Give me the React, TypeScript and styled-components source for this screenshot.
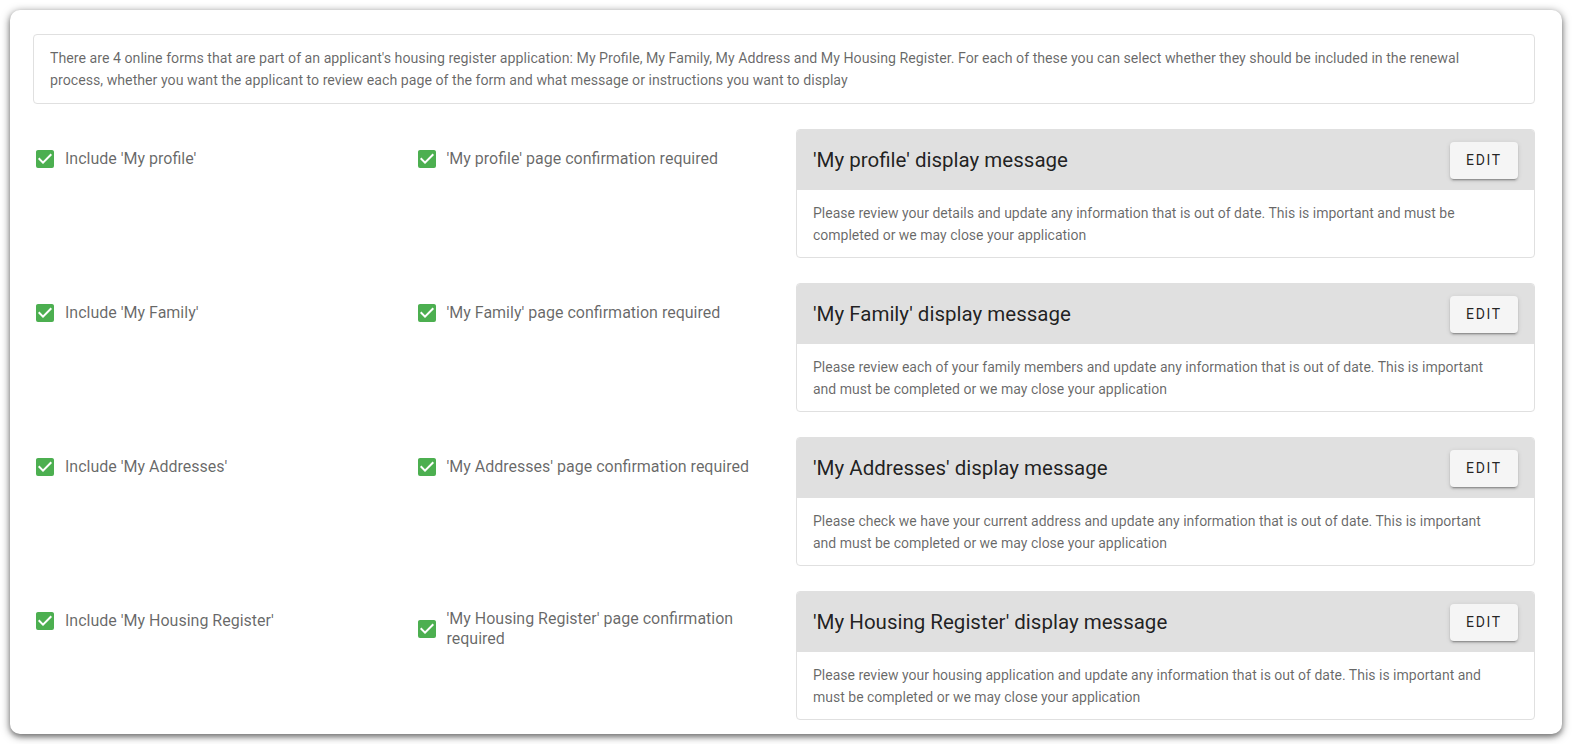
import React from "react";
import styled, { createGlobalStyle } from "styled-components";

interface FormSection {
  name: string;
  message: string;
}

const sections: FormSection[] = [
  {
    name: "My profile",
    message:
      "Please review your details and update any information that is out of date. This is important and must be completed or we may close your application",
  },
  {
    name: "My Family",
    message:
      "Please review each of your family members and update any information that is out of date. This is important and must be completed or we may close your application",
  },
  {
    name: "My Addresses",
    message:
      "Please check we have your current address and update any information that is out of date. This is important and must be completed or we may close your application",
  },
  {
    name: "My Housing Register",
    message:
      "Please review your housing application and update any information that is out of date. This is important and must be completed or we may close your application",
  },
];

function CheckIcon() {
  return (
    <svg width="24" height="24" viewBox="0 0 24 24">
      <path
        fill="#4caf50"
        d="M10,17L5,12L6.41,10.58L10,14.17L17.59,6.58L19,8M19,3H5C3.89,3 3,3.89 3,5V19A2,2 0 0,0 5,21H19A2,2 0 0,0 21,19V5C21,3.89 20.1,3 19,3Z"
      />
    </svg>
  );
}

function Checkbox({ label }: { label: string }) {
  return (
    <CheckRow>
      <IconBox>
        <CheckIcon />
      </IconBox>
      <Label>{label}</Label>
    </CheckRow>
  );
}

function App() {
  return (
    <>
      <GlobalStyle />
      <Page>
        <Sheet>
          <Intro>
            There are 4 online forms that are part of an applicant's housing register application: My
            Profile, My Family, My Address and My Housing Register. For each of these you can select
            whether they should be included in the renewal process, whether you want the applicant to
            review each page of the form and what message or instructions you want to display
          </Intro>
          {sections.map(section => (
            <Row key={section.name}>
              <Cell span={3}>
                <Checkbox label={"Include '" + section.name + "'"} />
              </Cell>
              <Cell span={3}>
                <Checkbox label={"'" + section.name + "' page confirmation required"} />
              </Cell>
              <Cell span={6}>
                <MessageCard>
                  <CardHeader>
                    <CardTitle>{"'" + section.name + "' display message"}</CardTitle>
                    <EditButton>Edit</EditButton>
                  </CardHeader>
                  <CardText>{section.message}</CardText>
                </MessageCard>
              </Cell>
            </Row>
          ))}
        </Sheet>
      </Page>
    </>
  );
}

const GlobalStyle = createGlobalStyle`
  body {
    margin: 0;
    background: #ffffff;
    font-family: Roboto, "Liberation Sans", sans-serif;
  }
`;

const Page = styled.div`
  padding: 10px 11px 11px 10px;
`;

const Sheet = styled.div`
  background: #ffffff;
  border-radius: 10px;
  box-shadow: 0 2px 8px rgba(0, 0, 0, 0.55), 0 3px 4px rgba(0, 0, 0, 0.18);
  padding: 24px 27px 14px 23px;
  display: flex;
  flex-direction: column;
  gap: 25px;
`;

const Intro = styled.div`
  border: 1px solid #e0e0e0;
  border-radius: 4px;
  padding: 12px 20px 12px 16px;
  font-size: 14.2px;
  line-height: 22px;
  color: rgba(0, 0, 0, 0.6);
`;

const Row = styled.div`
  display: grid;
  grid-template-columns: repeat(12, 1fr);
  column-gap: 24px;
`;

const Cell = styled.div<{ span: number }>`
  grid-column: span ${p => p.span};
  min-width: 0;
`;

const CheckRow = styled.div`
  display: flex;
  align-items: center;
  padding-top: 18px;
  min-height: 24px;
`;

const IconBox = styled.div`
  width: 24px;
  height: 24px;
  flex: none;
  margin-right: 8px;

  & svg {
    display: block;
  }
`;

const Label = styled.div`
  font-size: 16px;
  line-height: 20px;
  color: rgba(0, 0, 0, 0.6);
`;

const MessageCard = styled.div`
  border: 1px solid #e0e0e0;
  border-radius: 4px;
  overflow: hidden;
`;

const CardHeader = styled.div`
  background: #e0e0e0;
  height: 60px;
  padding: 0 16px;
  display: flex;
  align-items: center;
  justify-content: space-between;
`;

const CardTitle = styled.div`
  font-size: 20.5px;
  color: rgba(0, 0, 0, 0.87);
`;

const EditButton = styled.button`
  height: 37px;
  width: 68px;
  padding: 0;
  border: none;
  border-radius: 4px;
  background: #f5f5f5;
  font-family: Roboto, "Liberation Sans", sans-serif;
  font-size: 14px;
  font-weight: 400;
  letter-spacing: 0.12em;
  text-transform: uppercase;
  color: rgba(0, 0, 0, 0.87);
  cursor: pointer;
  box-shadow: 0 3px 1px -2px rgba(0, 0, 0, 0.2), 0 2px 2px 0 rgba(0, 0, 0, 0.14),
    0 1px 5px 0 rgba(0, 0, 0, 0.12);
`;

const CardText = styled.div`
  padding: 12px 28px 11px 16px;
  font-size: 14px;
  line-height: 22px;
  color: rgba(0, 0, 0, 0.6);
`;

export default App;
